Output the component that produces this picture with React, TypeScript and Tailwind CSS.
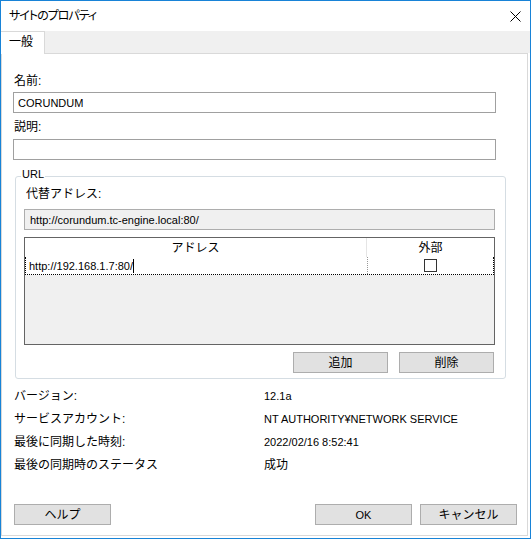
import React from 'react';

const infoRows: [string, string, boolean][] = [
  ['バージョン:', '12.1a', true],
  ['サービスアカウント:', 'NT AUTHORITY¥NETWORK SERVICE', true],
  ['最後に同期した時刻:', '2022/02/16 8:52:41', true],
  ['最後の同期時のステータス', '成功', false],
];

const Button: React.FC<{ label: string; className?: string }> = ({ label, className = '' }) => (
  <div
    className={`h-[21px] flex items-center justify-center bg-[#e1e1e1] border border-[#adadad] ${className}`}
  >
    {label}
  </div>
);

export default function App() {
  return (
    <div className="w-[531px] h-[539px] bg-white border border-[#1883d7] flex flex-col text-[12px] leading-[14px] text-black font-[family-name:'Liberation_Sans','Noto_Sans_CJK_JP',sans-serif]">
      {/* title bar */}
      <div className="h-[30px] flex items-center justify-between pl-[8px] pr-[9px] shrink-0">
        <span className="[font-feature-settings:'palt'] tracking-[-1px]">サイトのプロパティ</span>
        <svg width="11" height="11" viewBox="0 0 11 11">
          <path d="M0.5 0.5 L10.5 10.5 M10.5 0.5 L0.5 10.5" stroke="#000" strokeWidth="1" />
        </svg>
      </div>

      {/* tab strip */}
      <div className="h-[22px] bg-[#f0f0f0] flex items-end shrink-0">
        <div className="relative z-10 -mb-px h-[23px] w-[44px] bg-white border-t border-r border-[#d9d9d9] pl-[8px] pt-[3px]">
          一般
        </div>
      </div>

      {/* panel */}
      <div className="flex-1 flex flex-col border border-[#d9d9d9] mr-[2px] mb-[2px] pl-[11px] pb-[10px]">
        <div className="mt-[19px] h-[16px] leading-[16px] ml-[1px]">名前:</div>
        <div className="mt-[3px] w-[483px] h-[21px] border border-[#a0a0a0] flex items-center pl-[4px] text-[11px]">CORUNDUM</div>
        <div className="mt-[6px] h-[16px] leading-[16px] ml-[1px]">説明:</div>
        <div className="mt-[4px] w-[483px] h-[21px] border border-[#a0a0a0]" />

        <fieldset className="mt-[7px] ml-[2px] w-[491px] border border-[#d5dde3] rounded-[3px]">
          <legend className="ml-[5px] px-[1px] h-[18px] leading-[14px] pb-[4px] text-[11px]">URL</legend>
          <div className="pl-[8px] pb-[5px]">
            <div className="mt-[1px] h-[16px] leading-[16px] ml-[2px]">代替アドレス:</div>
            <div className="mt-[7px] w-[471px] h-[21px] bg-[#f0f0f0] border border-[#adadad] flex items-center pl-[5px] text-[11px]">
              http://corundum.tc-engine.local:80/
            </div>

            {/* list view */}
            <div className="mt-[7px] w-[471px] h-[108px] border border-[#646464] bg-[#f0f0f0] flex flex-col">
              <div className="h-[19px] bg-white flex">
                <div className="w-[342px] border-r border-[#e5e5e5] flex items-center justify-center">アドレス</div>
                <div className="flex-1 flex items-center justify-center">外部</div>
              </div>
              <div className="h-[18px] bg-white flex border-l border-r border-b border-dotted border-black">
                <div className="w-[341px] flex items-center pl-[3px] text-[11px]">
                  <span>http://192.168.1.7:80/</span>
                  <span className="w-px h-[14px] bg-black" />
                </div>
                <div className="flex-1 flex items-center justify-center border-l border-dotted border-[#999]">
                  <div className="w-[13px] h-[13px] border border-[#333] bg-white" />
                </div>
              </div>
            </div>

            <div className="mt-[7px] w-[470px] flex justify-end gap-[11px]">
              <Button label="追加" className="w-[95px]" />
              <Button label="削除" className="w-[95px]" />
            </div>
          </div>
        </fieldset>

        {/* info */}
        <div className="mt-[5px] ml-[1px] flex flex-col">
          {infoRows.map(([label, value, latin]) => (
            <div key={label} className="h-[23px] flex items-center">
              <span className="w-[250px]">{label}</span>
              <span className={latin ? 'text-[11px]' : ''}>{value}</span>
            </div>
          ))}
        </div>

        <div className="mt-auto ml-[1px] mr-[10px] flex">
          <Button label="ヘルプ" className="w-[97px]" />
          <div className="flex-1" />
          <Button label="OK" className="w-[97px] text-[11px]" />
          <Button label="キャンセル" className="w-[97px] ml-[8px]" />
        </div>
      </div>
    </div>
  );
}
